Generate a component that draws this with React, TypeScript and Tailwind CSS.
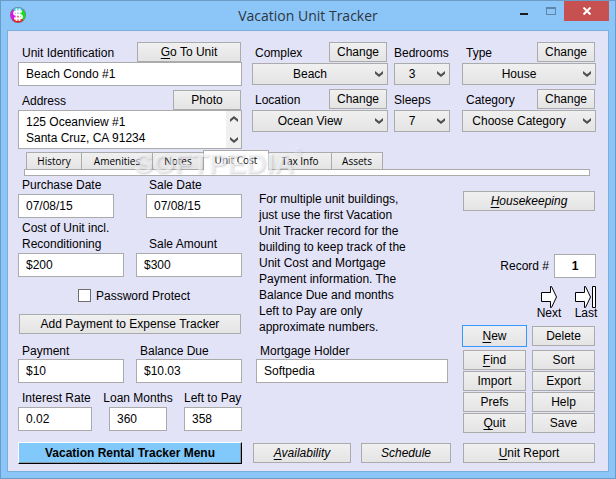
import type { InputHTMLAttributes, ReactNode } from 'react'
import clsx from 'clsx'

const tabs = ['History', 'Amenities', 'Notes', 'Unit Cost', 'Tax Info', 'Assets']

const tabWidths: Record<string, string> = {
  History: 'w-[56px]',
  Amenities: 'w-[72px]',
  Notes: 'w-[52px]',
  'Unit Cost': 'w-[66px]',
  'Tax Info': 'w-[64px]',
  Assets: 'w-[52px]',
}

function Button({ children, className }: { children: ReactNode; className?: string }) {
  return (
    <button
      type="button"
      className={clsx(
        'border border-[#ababab] bg-linear-to-b from-[#f0f0f0] to-[#e4e4e4] text-center leading-[18px] whitespace-nowrap',
        className
      )}
    >
      {children}
    </button>
  )
}

// label text with the first letter underlined as the keyboard shortcut
function Mnemonic({ text }: { text: string }) {
  return (
    <>
      <span className="underline underline-offset-2">{text[0]}</span>
      {text.slice(1)}
    </>
  )
}

function TextInput({ className, ...props }: InputHTMLAttributes<HTMLInputElement>) {
  return (
    <input
      type="text"
      className={clsx('h-6 w-full min-w-0 border border-[#ababab] bg-white px-[7px] outline-none', className)}
      {...props}
    />
  )
}

function Chevron({ up }: { up?: boolean }) {
  return (
    <svg width="8" height="6" viewBox="0 0 8 6" className={clsx('block', up && 'rotate-180')}>
      <path d="M0 0 L4 3.2 L8 0 V2.8 L4 6 L0 2.8 Z" fill="#505050" />
    </svg>
  )
}

interface SelectFieldProps {
  id: string
  label: string
  value: string
  change?: boolean
  labelClass?: string
}

function SelectField({ id, label, value, change, labelClass }: SelectFieldProps) {
  return (
    <div className="min-w-0">
      <div className="flex h-5 justify-between">
        <label htmlFor={id} className={clsx('pt-[3px] whitespace-nowrap', labelClass)}>
          {label}
        </label>
        {change && <Button className="mr-px w-[58px]">Change</Button>}
      </div>
      <div className="relative mt-px">
        <select
          id={id}
          defaultValue={value}
          className="block h-[22px] w-full appearance-none border border-[#ababab] bg-linear-to-b from-[#f0f0f0] to-[#e4e4e4] pr-[20px] text-center outline-none"
        >
          <option>{value}</option>
        </select>
        <span className="pointer-events-none absolute top-2 right-[5px]">
          <Chevron />
        </span>
      </div>
    </div>
  )
}

function AppIcon() {
  return (
    <svg width="16" height="16" viewBox="0 0 16 16">
      <circle cx="8" cy="8" r="8" fill="#7d6f86" />
      <path d="M8 8 L2.8 2.8 A7.3 7.3 0 0 1 13.2 2.8 Z" fill="#35cde0" />
      <path d="M8 8 L13.2 2.8 A7.3 7.3 0 0 1 13.2 13.2 Z" fill="#12e21c" />
      <path d="M8 8 L13.2 13.2 A7.3 7.3 0 0 1 2.8 13.2 Z" fill="#ee1c1c" />
      <path d="M8 8 L2.8 13.2 A7.3 7.3 0 0 1 2.8 2.8 Z" fill="#dd16e8" />
      <path
        d="M12 4.5 H6 Q4 4.5 4 6 Q4 7.8 6 7.8 H10 Q12 7.8 12 9.8 Q12 11.5 10 11.5 H4 M6.5 1.5 V14 M9.5 1.5 V14"
        fill="none"
        stroke="#fff"
        strokeWidth="1.8"
      />
    </svg>
  )
}

function TitleBar() {
  return (
    <header className="grid h-[29px] grid-cols-[1fr_auto_1fr]">
      <div className="pt-[6px] pl-[3px]">
        <AppIcon />
      </div>
      <h1 className="pt-[3px] font-['Open_Sans',sans-serif] text-[14px] leading-6 text-[#2c3640]">
        Vacation Unit Tracker
      </h1>
      <div className="flex h-5 justify-end">
        <button type="button" aria-label="Minimize" className="flex w-[27px] items-center justify-center">
          <svg width="8" height="10" viewBox="0 0 8 10">
            <path d="M0 7 H8 V9 H0 Z" fill="#1c1c1c" />
          </svg>
        </button>
        <button type="button" aria-label="Maximize" className="flex w-[27px] items-center justify-center">
          <svg width="10" height="8" viewBox="0 0 10 8">
            <path d="M0 0 H10 V8 H0 Z M1 2 V7 H9 V2 Z" fillRule="evenodd" fill="#5f86a8" />
          </svg>
        </button>
        <button type="button" aria-label="Close" className="flex w-[45px] items-center justify-center bg-[#c75050]">
          <svg width="8" height="8" viewBox="0 0 8 8">
            <path d="M0.5 0.5 L7.5 7.5 M7.5 0.5 L0.5 7.5" stroke="#fff" strokeWidth="2" />
          </svg>
        </button>
      </div>
    </header>
  )
}

function UnitHeader() {
  return (
    <section className="grid grid-cols-[224fr_200fr_134fr] gap-x-[10px]">
      <div>
        <div className="flex h-5 justify-between pr-px pl-1">
          <label htmlFor="unit" className="pt-[3px]">
            Unit Identification
          </label>
          <Button className="w-[104px]">
            <Mnemonic text="Go To Unit" />
          </Button>
        </div>
        <TextInput id="unit" defaultValue="Beach Condo #1" />
        <div className="mt-1 flex h-5 justify-between pr-px pl-1">
          <label htmlFor="address" className="pt-[3px]">
            Address
          </label>
          <Button className="w-[68px]">Photo</Button>
        </div>
        <div className="flex h-[39px] border border-[#ababab] bg-white">
          <textarea
            id="address"
            className="min-w-0 flex-1 resize-none overflow-hidden pt-[3px] pl-[7px] leading-4 outline-none"
            defaultValue={'125 Oceanview #1\nSanta Cruz, CA 91234'}
          />
          <div className="flex w-[15px] flex-col items-center justify-between bg-[#f0f0f0] py-[5px]">
            <Chevron up />
            <Chevron />
          </div>
        </div>
      </div>
      <div className="grid grid-cols-[136fr_56fr] content-start gap-x-[6px] gap-y-1 pr-[2px]">
        <SelectField id="complex" label="Complex" value="Beach" labelClass="pl-[3px]" change />
        <SelectField id="bedrooms" label="Bedrooms" value="3" />
        <SelectField id="location" label="Location" value="Ocean View" labelClass="pl-[3px]" change />
        <SelectField id="sleeps" label="Sleeps" value="7" />
      </div>
      <div className="grid content-start gap-y-1">
        <SelectField id="type" label="Type" value="House" labelClass="pl-1" change />
        <SelectField id="category" label="Category" value="Choose Category" labelClass="pl-1" change />
      </div>
    </section>
  )
}

function TabBar() {
  return (
    <div className="relative mt-px mr-[6px] ml-[6px]">
      <div role="tablist" className="flex h-[19px] items-end pl-[2px] font-['Open_Sans',sans-serif] text-[10px]">
        {tabs.map((tab) => (
          <button
            key={tab}
            type="button"
            role="tab"
            aria-selected={tab === 'Unit Cost'}
            className={clsx(
              '-mr-px border border-b-0 border-[#ababab] whitespace-nowrap',
              tabWidths[tab],
              tab === 'Unit Cost'
                ? 'relative -mb-px h-5 bg-white pb-px leading-[18px]'
                : 'h-[17px] bg-linear-to-b from-[#f0f0f0] to-[#e4e4e4] leading-[17px]'
            )}
          >
            {tab}
          </button>
        ))}
      </div>
      <div className="h-[7px] border border-[#ababab] bg-white" />
      <div
        aria-hidden="true"
        className="pointer-events-none absolute top-0 left-[110px] flex text-[28px] leading-[28px] font-bold whitespace-nowrap text-white/55 [text-shadow:1px_1px_2px_rgba(110,110,130,0.3)]"
      >
        SOFTPEDIA
        <span className="-mt-1 text-[10px] leading-3 font-normal">®</span>
      </div>
    </div>
  )
}

function CostForm() {
  return (
    <div>
      <div className="grid grid-cols-2 gap-x-8">
        <div>
          <label htmlFor="purchase" className="block h-[18px] pt-px pl-1">
            Purchase Date
          </label>
          <TextInput id="purchase" defaultValue="07/08/15" />
        </div>
        <div>
          <label htmlFor="sale-date" className="block h-[18px] pt-px pl-[3px]">
            Sale Date
          </label>
          <TextInput id="sale-date" defaultValue="07/08/15" />
        </div>
      </div>
      <div className="mt-[2px] grid grid-cols-2 items-end gap-x-3">
        <div>
          <label htmlFor="cost" className="block pb-px pl-1 whitespace-nowrap">
            Cost of Unit incl.
            <br />
            Reconditioning
          </label>
          <TextInput id="cost" defaultValue="$200" />
        </div>
        <div>
          <label htmlFor="sale-amount" className="block pb-px pl-[13px]">
            Sale Amount
          </label>
          <TextInput id="sale-amount" defaultValue="$300" />
        </div>
      </div>
      <label className="mt-[10px] flex h-[17px] items-center gap-[5px] pl-[60px]">
        <input type="checkbox" className="h-[13px] w-[13px] appearance-none border border-[#707070] bg-white" />
        Password Protect
      </label>
      <div className="mt-[10px] grid px-px">
        <Button>Add Payment to Expense Tracker</Button>
      </div>
      <div className="mt-[9px] grid grid-cols-2 gap-x-3">
        <div>
          <label htmlFor="payment" className="block pl-1">
            Payment
          </label>
          <TextInput id="payment" defaultValue="$10" />
        </div>
        <div>
          <label htmlFor="balance" className="block pl-1">
            Balance Due
          </label>
          <TextInput id="balance" defaultValue="$10.03" />
        </div>
      </div>
      <div className="mt-[7px] grid grid-cols-[74fr_58fr_58fr] gap-x-[17px] whitespace-nowrap">
        <div className="min-w-0">
          <label htmlFor="rate" className="block pb-px pl-1">
            Interest Rate
          </label>
          <TextInput id="rate" defaultValue="0.02" />
        </div>
        <div className="flex min-w-0 flex-col items-center">
          <label htmlFor="months" className="pb-px">
            Loan Months
          </label>
          <TextInput id="months" defaultValue="360" />
        </div>
        <div className="min-w-0">
          <label htmlFor="left" className="block pb-px">
            Left to Pay
          </label>
          <TextInput id="left" defaultValue="358" />
        </div>
      </div>
    </div>
  )
}

function MortgageInfo() {
  return (
    <div className="pt-[15px] pr-1 pl-1">
      <p className="max-w-[159px] pl-[3px]">
        For multiple unit buildings, just use the first Vacation Unit Tracker record for the building to keep track of
        the Unit Cost and Mortgage Payment information. The Balance Due and months Left to Pay are only approximate
        numbers.
      </p>
      <label htmlFor="holder" className="mt-2 block pl-1">
        Mortgage Holder
      </label>
      <TextInput id="holder" defaultValue="Softpedia" />
    </div>
  )
}

function RecordPanel() {
  return (
    <div className="flex flex-col pt-[15px]">
      <div className="grid px-px">
        <Button className="italic">
          <Mnemonic text="Housekeeping" />
        </Button>
      </div>
      <div className="mt-[43px] flex items-center justify-end gap-[5px]">
        <label htmlFor="record">Record #</label>
        <div className="w-[42px]">
          <TextInput id="record" className="text-center font-bold" defaultValue="1" />
        </div>
      </div>
      <div className="mt-2 flex justify-end gap-[13px]">
        <button type="button" className="flex w-6 flex-col items-center">
          <svg width="16" height="22" viewBox="0 0 16 22">
            <path d="M0.5 6.5 H9.5 V0.5 H10.5 L15.5 11 L10.5 21.5 H9.5 V15.5 H0.5 Z" fill="#fff" stroke="#000" />
          </svg>
          <span className="-mt-[3px]">Next</span>
        </button>
        <button type="button" className="-mr-[2px] flex w-6 flex-col items-center">
          <svg width="22" height="22" viewBox="0 0 22 22">
            <path
              d="M0.5 6.5 H9.5 V0.5 H10.5 L15.5 11 L10.5 21.5 H9.5 V15.5 H0.5 Z M17.5 0.5 H20.5 V21.5 H17.5 Z"
              fill="#fff"
              stroke="#000"
            />
          </svg>
          <span className="-mt-[3px]">Last</span>
        </button>
      </div>
      <div className="mt-1 grid grid-cols-2 gap-x-1">
        <button
          type="button"
          className="h-[22px] border border-[#3399ff] bg-linear-to-b from-[#f0f0f0] to-[#e4e4e4] leading-5"
        >
          <Mnemonic text="New" />
        </button>
        <Button className="my-px mr-px ml-px">Delete</Button>
      </div>
      <div className="mt-[3px] grid grid-cols-2 gap-x-[6px] gap-y-px px-px">
        <Button>
          <Mnemonic text="Find" />
        </Button>
        <Button>Sort</Button>
        <Button>Import</Button>
        <Button>Export</Button>
        <Button>Prefs</Button>
        <Button>Help</Button>
        <Button>
          <Mnemonic text="Quit" />
        </Button>
        <Button>Save</Button>
      </div>
    </div>
  )
}

export default function App() {
  return (
    <div className="flex min-h-screen flex-col border border-[#6a9cc6] bg-[#8cc6f9] px-[6px] pb-[6px] font-['Liberation_Sans',Arial,sans-serif] text-[12px] leading-4 text-black">
      <TitleBar />
      <main className="flex-1 border border-[#7aaedb] bg-[#e3e3f8] pt-[11px] pr-3 pb-[7px] pl-[10px]">
        <UnitHeader />
        <TabBar />
        <section className="grid grid-cols-[224fr_200fr_134fr] gap-x-[10px]">
          <CostForm />
          <MortgageInfo />
          <RecordPanel />
        </section>
        <footer className="mt-[9px] grid grid-cols-[224fr_200fr_134fr] items-center gap-x-[10px]">
          <button
            type="button"
            className="h-[22px] border border-t-white border-r-black border-b-black border-l-white bg-[#82c9fb] font-bold shadow-[inset_-1px_-1px_0_#8a9aa6]"
          >
            Vacation Rental Tracker Menu
          </button>
          <div className="grid grid-cols-[98fr_90fr] gap-x-[10px] px-px italic">
            <Button>
              <Mnemonic text="Availability" />
            </Button>
            <Button>Schedule</Button>
          </div>
          <div className="grid px-px">
            <Button>
              <Mnemonic text="Unit Report" />
            </Button>
          </div>
        </footer>
      </main>
    </div>
  )
}
